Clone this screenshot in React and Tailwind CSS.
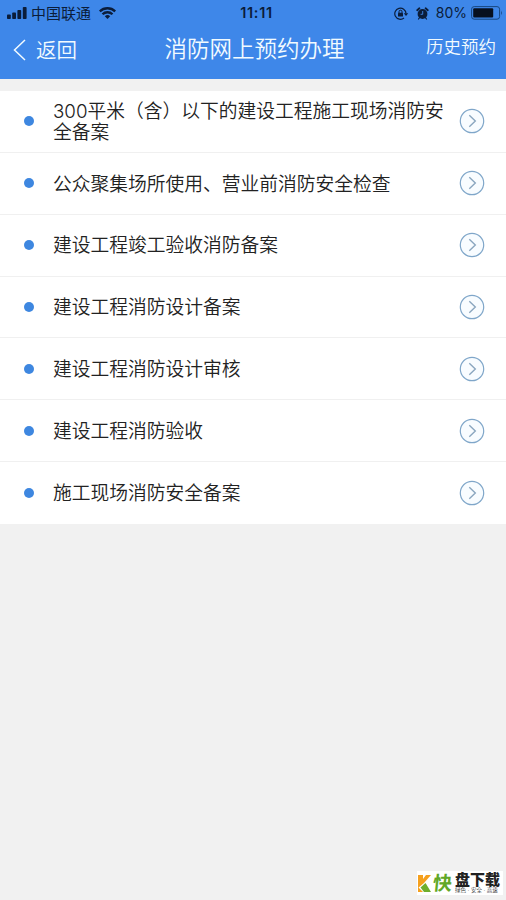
import React from 'react'

const services = [
  '300平米（含）以下的建设工程施工现场消防安全备案',
  '公众聚集场所使用、营业前消防安全检查',
  '建设工程竣工验收消防备案',
  '建设工程消防设计备案',
  '建设工程消防设计审核',
  '建设工程消防验收',
  '施工现场消防安全备案',
]

function SignalIcon() {
  return (
    <svg className="h-[12px] w-[20px]" viewBox="0 0 20 12" fill="currentColor">
      <rect x="0" y="7.5" width="3.8" height="4.5" rx="0.8" />
      <rect x="5.2" y="5.5" width="3.8" height="6.5" rx="0.8" />
      <rect x="10.4" y="3" width="3.8" height="9" rx="0.8" />
      <rect x="15.8" y="0" width="3.8" height="12" rx="0.8" />
    </svg>
  )
}

function WifiIcon() {
  return (
    <svg className="h-[12px] w-[17px]" viewBox="0 0 17 12" fill="none" stroke="currentColor" strokeWidth="2.3">
      <path d="M0.8 4.4a11 11 0 0 1 15.4 0" />
      <path d="M3.5 7.3a7.1 7.1 0 0 1 10 0" />
      <path d="M8.5 12 5.8 9.3a3.9 3.9 0 0 1 5.4 0Z" fill="currentColor" stroke="none" />
    </svg>
  )
}

function RotationLockIcon() {
  return (
    <svg className="h-[13px] w-[15px]" viewBox="0 0 15 13" fill="none" stroke="currentColor" strokeWidth="1.2">
      <path d="M10 11A5.6 5.6 0 1 1 12 6.4" />
      <path d="M9.8 6.2h4.4L12 9Z" fill="currentColor" stroke="none" />
      <rect x="4" y="5.8" width="5" height="3.8" rx="0.4" fill="currentColor" stroke="none" />
      <path d="M5 6V4.7a1.5 1.5 0 0 1 3 0V6" strokeWidth="1" />
    </svg>
  )
}

function AlarmIcon() {
  return (
    <svg className="h-[13px] w-[13px]" viewBox="0 0 13 13">
      <g fill="none" stroke="currentColor" strokeLinecap="round">
        <path d="M1.2 3.2 3.4 1.3M11.8 3.2 9.6 1.3" strokeWidth="1.8" />
        <path d="m3.4 10.8-.9 1.2M9.6 10.8l.9 1.2" strokeWidth="1.2" />
      </g>
      <circle cx="6.5" cy="7" r="4.9" fill="currentColor" />
      <path d="M6.7 4v3.3H4.6" fill="none" stroke="#3e87e9" strokeWidth="0.9" />
    </svg>
  )
}

function BatteryIcon() {
  return (
    <svg className="h-[14px] w-[32px]" viewBox="0 0 32 14">
      <rect x="0.6" y="0.6" width="28" height="12.6" rx="2.6" fill="none" stroke="#17467f" strokeWidth="1" />
      <rect x="2.2" y="2.2" width="20" height="9.4" rx="1" fill="#07101f" />
      <path d="M30.2 4.6q1.6 2.3 0 4.6Z" fill="#17467f" />
    </svg>
  )
}

function StatusBar() {
  return (
    <div className="grid h-[26px] grid-cols-[1fr_auto_1fr] items-center pl-[7px] pr-[3px] text-[15px] leading-none text-[#0b1d3a]">
      <div className="flex items-center">
        <SignalIcon />
        <span className="ml-[4px] mr-[8px]">中国联通</span>
        <WifiIcon />
      </div>
      <span className="pl-[3px] font-['Inter','Liberation_Sans',sans-serif] text-[14.5px] font-semibold tracking-[0.7px]">
        11:11
      </span>
      <div className="flex items-center justify-end">
        <RotationLockIcon />
        <span className="ml-[7px] mr-[7px]">
          <AlarmIcon />
        </span>
        <span className="mr-[4px] font-['Inter','Liberation_Sans',sans-serif] text-[14px]">80%</span>
        <BatteryIcon />
      </div>
    </div>
  )
}

function NavBar() {
  return (
    <nav className="grid h-[53px] grid-cols-[1fr_auto_1fr] items-center pl-[13px] pr-[10px] text-[#f2fbff]">
      <button className="flex items-center pb-[5px] text-[20.5px] font-[350] leading-none">
        <svg className="mr-[10px] h-[22px] w-[13px]" viewBox="0 0 13 22" fill="none" stroke="currentColor" strokeWidth="1.5">
          <path d="M12 1 1.5 11 12 21" />
        </svg>
        <span className="pt-[2px]">返回</span>
      </button>
      <h1 className="pb-[5px] text-[22.5px] font-[350] leading-none">消防网上预约办理</h1>
      <button className="justify-self-end pb-[10px] text-[17.5px] font-[350] leading-none">历史预约</button>
    </nav>
  )
}

function ServiceRow({ title }) {
  return (
    <li className="flex h-[61.85px] items-center border-b border-[#f0f0f0] pl-[24px] pr-[21px] last:border-b-0">
      <span className="h-[10px] w-[10px] shrink-0 rounded-full bg-[#3e87e0]" />
      <span className="ml-[19px] w-[394px] pt-[3px] font-['Inter','Noto_Sans_CJK_SC',sans-serif] text-[18.75px] font-[350] leading-[20.5px] text-[#222222]">
        {title}
      </span>
      <svg className="ml-auto h-[26px] w-[26px] shrink-0" viewBox="0 0 26 26" fill="none">
        <circle cx="13" cy="13" r="11.7" fill="#f8fcff" stroke="#7fa6c9" strokeWidth="1.2" />
        <path d="m10.3 7.3 6 5.7-6 5.7" stroke="#8aa6bf" strokeWidth="1.4" />
      </svg>
    </li>
  )
}

function Watermark() {
  return (
    <div className="absolute bottom-[5px] right-[3px] flex h-[24px] w-[86px] items-center bg-white">
      <svg className="ml-px h-[17px] w-[13px] shrink-0" viewBox="0 0 13 17">
        <path d="M0 0h5v4l3-4h5L6 8l-6 5Z" fill="#f5a01e" />
        <path d="M0 12v5h5Z" fill="#f5a01e" />
        <path d="m7.5 8 5.5 9H6L2.5 12.5Z" fill="#6fae2c" />
      </svg>
      <span className="ml-[2px] -skew-x-6 text-[19px] font-bold leading-none text-[#62a827]">快</span>
      <span className="ml-[3px] flex flex-col">
        <span className="whitespace-nowrap text-[15px] font-black leading-[15px] text-[#222222]">盘下载</span>
        <span className="whitespace-nowrap text-[5.5px] leading-[7px] text-[#444444]">绿色 · 安全 · 高速</span>
      </span>
    </div>
  )
}

function App() {
  return (
    <div className="relative h-[900px] w-[506px] overflow-hidden bg-[#f1f1f1] font-['Liberation_Sans','Noto_Sans_CJK_SC',sans-serif]">
      <header className="h-[79px] bg-[#3e87e9]">
        <StatusBar />
        <NavBar />
      </header>
      <ul className="mt-[12px] bg-white">
        {services.map((title) => (
          <ServiceRow key={title} title={title} />
        ))}
      </ul>
      <Watermark />
    </div>
  )
}

export default App
